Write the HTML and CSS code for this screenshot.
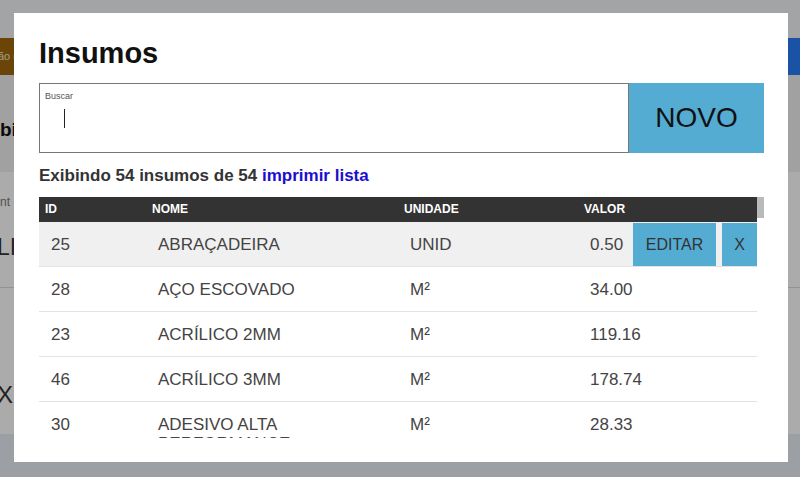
FILE: index.html
```html
<!DOCTYPE html>
<html lang="pt-BR">
<head>
    <meta charset="UTF-8">
    <meta name="viewport" content="width=device-width, initial-scale=1.0">
    <title>Insumos</title>
    <link rel="stylesheet" href="styles.css">
</head>
<body>

    <!-- Page behind the modal -->
    <div class="page">
        <div class="page-top"></div>
        <div class="page-nav">
            <span class="nav-brand">ão (</span>
            <span class="nav-user"></span>
        </div>
        <div class="page-head"><b>bi</b></div>
        <div class="page-card">
            <div class="card-label">nt</div>
            <div class="card-value">LIC</div>
        </div>
        <div class="page-list"><span class="list-x">X</span></div>
        <div class="page-foot"></div>
    </div>

    <div class="overlay"></div>

    <!-- Insumos modal -->
    <div class="modal">
        <h1 class="modal-title">Insumos</h1>

        <div class="search">
            <div class="search-field">
                <label class="search-label">Buscar</label>
                <span class="caret"></span>
            </div>
            <button class="btn-novo">NOVO</button>
        </div>

        <div class="count">Exibindo 54 insumos de 54 <a href="#" class="print-link">imprimir lista</a></div>

        <div class="list">
            <div class="list-view">
                <div class="row row-head">
                    <div class="cell">ID</div>
                    <div class="cell">NOME</div>
                    <div class="cell">UNIDADE</div>
                    <div class="cell">VALOR</div>
                </div>
                <div class="row row-active">
                    <div class="cell">25</div>
                    <div class="cell">ABRAÇADEIRA</div>
                    <div class="cell">UNID</div>
                    <div class="cell cell-value">
                        <span class="value">0.50</span>
                        <div class="actions">
                            <button class="btn-action">EDITAR</button>
                            <button class="btn-action">X</button>
                        </div>
                    </div>
                </div>
                <div class="row">
                    <div class="cell">28</div>
                    <div class="cell">AÇO ESCOVADO</div>
                    <div class="cell">M²</div>
                    <div class="cell cell-value"><span class="value">34.00</span></div>
                </div>
                <div class="row">
                    <div class="cell">23</div>
                    <div class="cell">ACRÍLICO 2MM</div>
                    <div class="cell">M²</div>
                    <div class="cell cell-value"><span class="value">119.16</span></div>
                </div>
                <div class="row">
                    <div class="cell">46</div>
                    <div class="cell">ACRÍLICO 3MM</div>
                    <div class="cell">M²</div>
                    <div class="cell cell-value"><span class="value">178.74</span></div>
                </div>
                <div class="row">
                    <div class="cell">30</div>
                    <div class="cell">ADESIVO ALTA PERFORMANCE</div>
                    <div class="cell">M²</div>
                    <div class="cell cell-value"><span class="value">28.33</span></div>
                </div>
            </div>
            <div class="scroll-track"><div class="scroll-thumb"></div></div>
        </div>
    </div>

</body>
</html>
```

FILE: styles.css
```css
body{
    margin: 0;
    font-family: "Liberation Sans", Arial, sans-serif;
    background-color: #e9edf3;
    overflow: hidden;
}

/* page behind */
.page {
    display: flex;
    flex-direction: column;
    height: 477px;
}
.page-top {
    height: 38px;
    background-color: #f3f5f8;
}
.page-nav {
    height: 37px;
    display: flex;
    justify-content: space-between;
    background-color: #f3f5f8;
}
.nav-brand {
    width: 120px;
    background-color: #a0680c;
    color: #f0e6d0;
    font-size: 11px;
    line-height: 37px;
    text-indent: -2px;
}
.nav-user {
    width: 40px;
    background-color: #287df8;
    border-left: 2px solid #5bce57;
}
.page-head {
    height: 97px;
    background-color: #f0f0f0;
    font-size: 19px;
    line-height: 110px;
    color: #111;
}
.page-card {
    height: 115px;
    background-color: #fff;
    border-bottom: 1px solid #dcdcdc;
}
.card-label {
    margin-top: 23px;
    font-size: 12px;
    color: #777;
}
.card-value {
    margin-top: 25px;
    font-size: 23px;
    color: #333;
    text-indent: -3px;
}
.page-list {
    height: 146px;
    background-color: #fff;
}
.list-x {
    display: block;
    margin-top: 93px;
    font-size: 24px;
    color: #333;
    text-indent: -3px;
}
.page-foot {
    flex: 1;
    background-color: #e9edf3;
}

.overlay {
    position: fixed;
    inset: 0;
    background-color: rgba(0, 0, 0, 0.33);
}

/* modal */
.modal {
    position: fixed;
    left: 14px;
    top: 13px;
    width: 774px;
    height: 449px;
    box-sizing: border-box;
    padding: 20px 24px 0 25px;
    background-color: #fff;
}
.modal-title {
    margin: 0;
    font-size: 29px;
    line-height: 40px;
    font-weight: bold;
    color: #111;
}

.search {
    display: flex;
    height: 70px;
    margin-top: 10px;
}
.search-field {
    flex: 0 0 590px;
    box-sizing: border-box;
    border: 1px solid #777;
    padding: 7px 0 0 5px;
}
.search-label {
    display: block;
    font-size: 9px;
    line-height: 11px;
    color: #555;
}
.caret {
    display: block;
    width: 1px;
    height: 19px;
    margin: 7px 0 0 19px;
    background-color: #222;
}
.btn-novo {
    flex: 1;
    border: none;
    background-color: #54acd2;
    font-family: inherit;
    font-size: 28px;
    color: #111;
}

.count {
    margin-top: 13px;
    font-size: 17px;
    line-height: 20px;
    font-weight: bold;
    color: #333;
}
.print-link {
    color: #1c0ed0;
    text-decoration: none;
}

/* insumos list */
.list {
    display: flex;
    margin-top: 11px;
    height: 241px;
}
.list-view {
    width: 718px;
    overflow: hidden;
}
.scroll-track {
    width: 7px;
}
.scroll-thumb {
    height: 21px;
    background-color: #bababa;
}

.row {
    display: grid;
    grid-template-columns: 107px 252px 180px 179px;
    border-bottom: 1px solid #e2e2e2;
    font-size: 17px;
    line-height: 19px;
    color: #444;
}
.row .cell {
    padding: 13px 12px 12px;
}
.row-head {
    background-color: #333;
    border-bottom: none;
    font-size: 12px;
    font-weight: bold;
    color: #fff;
}
.row-head .cell {
    padding: 0 0 0 6px;
    line-height: 25px;
}
.row-active {
    background-color: #f0f0f0;
}

.row .cell-value {
    display: flex;
    padding: 0 0 0 12px;
}
.value {
    padding: 13px 0 12px;
}
.actions {
    display: flex;
    gap: 6px;
    margin-left: auto;
    padding-top: 1px;
}
.btn-action {
    border: none;
    padding: 0 13px;
    background-color: #54acd2;
    font-family: inherit;
    font-size: 16px;
    color: #333;
}
.btn-action:last-child {
    padding: 0 12px;
}
```
